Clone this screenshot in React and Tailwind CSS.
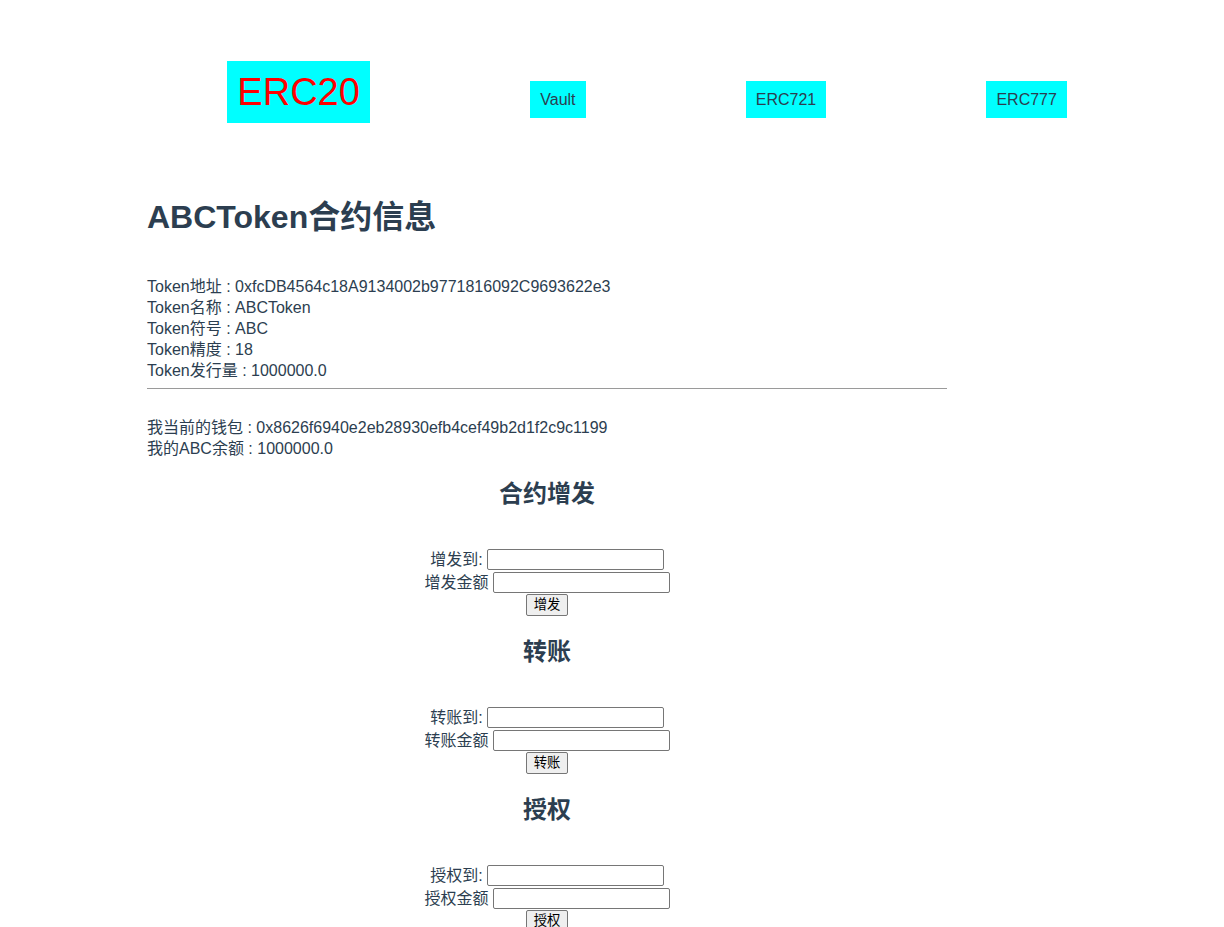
import React from "react";

const font = { fontFamily: '"Liberation Sans", "Noto Sans CJK SC", sans-serif' };

function NavItem({ label, active }) {
  if (active) {
    return (
      <span className="bg-[#00ffff] w-[143px] h-[62px] flex items-center justify-center text-[38px] leading-[44px] text-[#ff0000]">
        {label}
      </span>
    );
  }
  return (
    <span className="mt-[20px] bg-[#00ffff] px-[10px] h-[37px] flex items-center text-[16px] leading-[17px] text-[#2c3e50]">
      {label}
    </span>
  );
}

function FormSection({ title, action }) {
  return (
    <div className="mt-[22px] first:mt-0">
      <h2 className="text-[24px] leading-[28px] font-bold text-center">{title}</h2>
      <div className="mt-[40px] text-[16px]">
        <div className="h-[23px] flex items-center justify-center gap-[4px]">
          <span>{action}到:</span>
          <input className="w-[177px] h-[21px] border border-[#767676] rounded-[2px] bg-white" />
        </div>
        <div className="h-[23px] flex items-center justify-center gap-[4px]">
          <span>{action}金额</span>
          <input className="w-[177px] h-[21px] border border-[#767676] rounded-[2px] bg-white" />
        </div>
        <div className="h-[22px] flex items-center justify-center">
          <button className="h-[22px] px-[7px] text-[13.33px] text-black bg-[#efefef] border border-[#767676] rounded-[2px] leading-none">
            {action}
          </button>
        </div>
      </div>
    </div>
  );
}

export default function App() {
  const info = [
    ["Token地址", "0xfcDB4564c18A9134002b9771816092C9693622e3"],
    ["Token名称", "ABCToken"],
    ["Token符号", "ABC"],
    ["Token精度", "18"],
    ["Token发行量", "1000000.0"],
  ];

  return (
    <div className="min-h-screen bg-white text-[#2c3e50]" style={font}>
      <div className="pt-[61px] ml-[147px] w-[1000px] flex justify-around items-start">
        <NavItem label="ERC20" active />
        <NavItem label="Vault" />
        <NavItem label="ERC721" />
        <NavItem label="ERC777" />
      </div>

      <div className="ml-[147px] w-[800px]">
        <h1 className="mt-[74px] text-[32px] leading-[40px] font-bold">ABCToken合约信息</h1>

        <div className="mt-[39px] text-[16px] leading-[21px]">
          {info.map(([k, v]) => (
            <div key={k}>
              {k} : {v}
            </div>
          ))}
        </div>
        <div className="mt-[7px] border-t border-[#9a9a9a]" />

        <div className="mt-[28px] text-[16px] leading-[21px]">
          <div>我当前的钱包 : 0x8626f6940e2eb28930efb4cef49b2d1f2c9c1199</div>
          <div>我的ABC余额 : 1000000.0</div>
        </div>

        <div className="mt-[21px]">
          <FormSection title="合约增发" action="增发" />
          <FormSection title="转账" action="转账" />
          <FormSection title="授权" action="授权" />
        </div>
      </div>
    </div>
  );
}
